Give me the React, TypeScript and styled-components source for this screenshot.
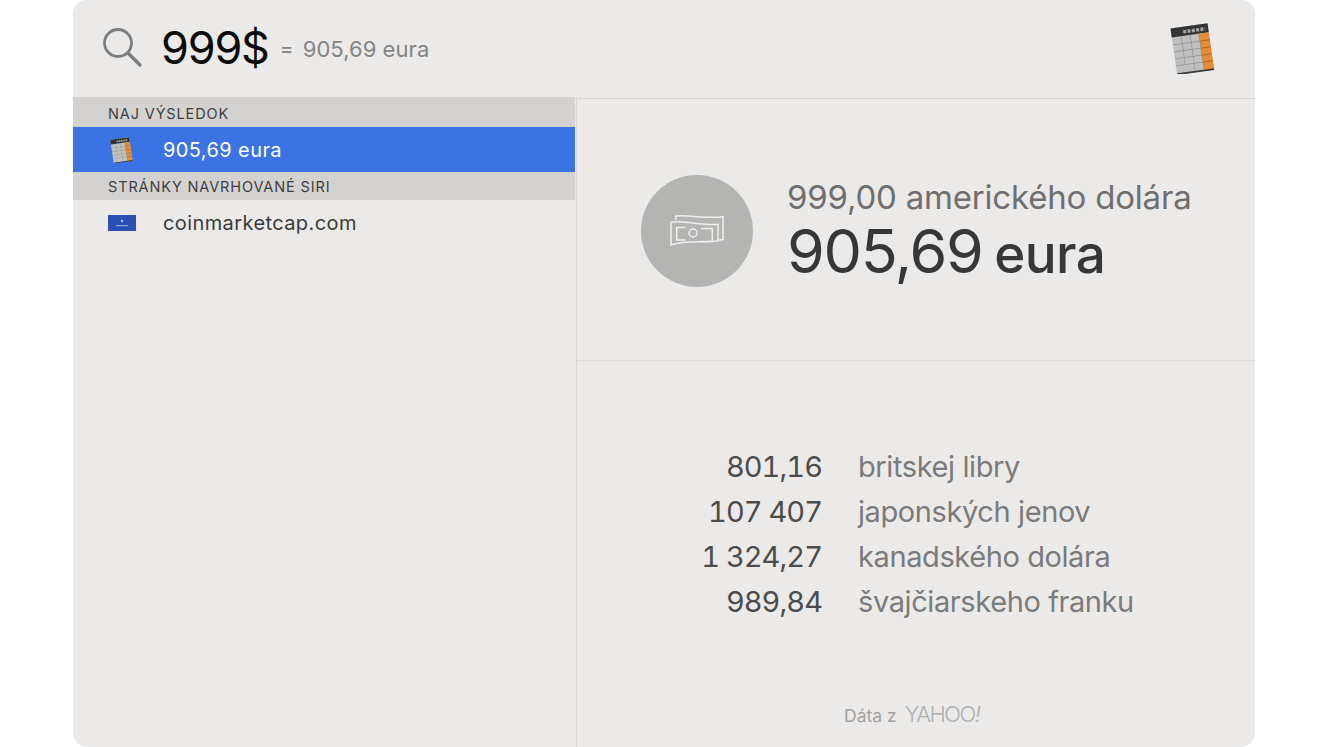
import React from "react";
import styled, { createGlobalStyle } from "styled-components";

const Global = createGlobalStyle`
  html, body { margin: 0; padding: 0; background: #fff; }
  body { font-family: Inter, "Liberation Sans", sans-serif; overflow: hidden; }
`;

const Page = styled.div`
  width: 1328px;
  height: 747px;
  display: flex;
  justify-content: flex-start;
  padding-left: 73px;
  box-sizing: border-box;
`;

const Panel = styled.div`
  width: 1182px;
  height: 747px;
  background: #ebeae9;
  border-radius: 14px;
  overflow: hidden;
  display: flex;
  flex-direction: column;
`;

const SearchBar = styled.header`
  height: 99px;
  flex: none;
  box-sizing: border-box;
  border-bottom: 1px solid #d6d5d4;
  display: flex;
  align-items: center;
  padding: 0 40px 0 28px;
`;

const SearchIcon = styled.svg`
  width: 42px;
  height: 42px;
  flex: none;
  margin-right: 18px;
  margin-top: -4px;
`;

const Query = styled.span`
  font-size: 45px;
  letter-spacing: -1.2px;
  color: #0b0b0b;
  line-height: 1;
  margin-top: -4px;
`;

const Equals = styled.span`
  font-size: 21px;
  color: #858585;
  margin-left: 11px;
  margin-right: 9px;
  margin-top: -1px;
`;

const QueryResult = styled.span`
  font-size: 22px;
  letter-spacing: 0.05px;
  color: #858585;
  margin-top: -1px;
`;

const AppIconSlot = styled.div`
  margin-left: auto;
  display: flex;
  margin-top: -2px;
`;

const Body = styled.div`
  flex: 1;
  display: flex;
  min-height: 0;
`;

const Sidebar = styled.aside`
  width: 502px;
  padding-right: 1px;
  flex: none;
  display: flex;
  flex-direction: column;
  border-right: 1px solid #d8d7d6;
  margin-top: -2px;
`;

const SectionHeader = styled.div<{ $h: number; $pad: number }>`
  height: ${(p) => p.$h}px;
  box-sizing: border-box;
  padding-top: ${(p) => p.$pad}px;
  background: #d3d2d1;
  color: #3f3f3f;
  font-size: 14.5px;
  letter-spacing: 0.87px;
  display: flex;
  align-items: center;
  padding-left: 35px;
`;

const Row = styled.div<{ $selected?: boolean }>`
  height: 45px;
  display: flex;
  align-items: center;
  background: ${(p) => (p.$selected ? "#3b73e4" : "transparent")};
  color: ${(p) => (p.$selected ? "#ffffff" : "#3a3a3a")};
  font-size: 20px;
  letter-spacing: 0.4px;
`;

const RowIcon = styled.div<{ $left: number }>`
  width: 90px;
  padding-left: ${(p) => p.$left}px;
  box-sizing: border-box;
  flex: none;
  display: flex;
`;

const Detail = styled.main`
  flex: 1;
  display: flex;
  flex-direction: column;
  min-width: 0;
  padding-top: 2px;
  margin-top: -2px;
`;

const Hero = styled.section`
  height: 262px;
  flex: none;
  box-sizing: border-box;
  border-bottom: 1px solid #dddcdb;
  display: flex;
  align-items: center;
  padding-left: 64px;
`;

const Coin = styled.div`
  width: 112px;
  height: 112px;
  border-radius: 50%;
  background: #b4b4b3;
  display: flex;
  align-items: center;
  justify-content: center;
  flex: none;
  margin-right: 34px;
  margin-top: 3px;
`;

const HeroText = styled.div`
  display: flex;
  flex-direction: column;
  margin-top: 8px;
`;

const HeroFrom = styled.div`
  font-size: 33px;
  line-height: 40px;
  letter-spacing: -0.2px;
  color: #6f6f6f;
`;

const HeroTo = styled.div`
  font-size: 53px;
  font-weight: 500;
  line-height: 72px;
  letter-spacing: -0.6px;
  word-spacing: -2px;
  color: #373737;
  white-space: nowrap;
  margin-top: -2px;
`;

const HeroDigits = styled.span`
  font-size: 61px;
  font-weight: 400;
  line-height: 72px;
  letter-spacing: -1.3px;
`;

const Rates = styled.section`
  flex: 1;
  display: flex;
  flex-direction: column;
  align-items: stretch;
  padding-top: 83px;
  position: relative;
`;

const RateRow = styled.div`
  height: 45px;
  display: flex;
  align-items: center;
  font-size: 29px;
`;

const Amount = styled.span`
  width: 245px;
  text-align: right;
  color: #4c4c4c;
  flex: none;
  font-variant-numeric: tabular-nums;
  letter-spacing: -0.95px;
`;

const Currency = styled.span`
  margin-left: 36px;
  color: #7b7b7b;
  letter-spacing: -0.4px;
`;

const Attribution = styled.div`
  position: absolute;
  left: 267px;
  bottom: 20px;
  display: flex;
  align-items: baseline;
  font-size: 17.5px;
  color: #a3a3a3;
`;

const YahooMark = styled.span`
  font-size: 22px;
  font-weight: 300;
  letter-spacing: -1.5px;
  margin-left: 8px;
  color: #b0b0b0;
`;

const YahooBang = styled.span`
  font-style: italic;
`;

const Calculator = ({ width, height }: { width: number; height: number }) => (
  <svg width={width} height={height} viewBox="0 0 45 51">
    <g transform="matrix(1 -0.139 0.144 1 0.5 5.5)">
      <rect x="0" y="0" width="37" height="46" rx="1" fill="#bfbfbe" />
      <rect x="0" y="0" width="37" height="9" fill="#343433" />
      <rect x="27" y="9" width="10" height="37" fill="#e58c35" />
      <rect x="0" y="44.800" width="37" height="1.800" fill="#3c3c3c" />
      {[16, 23, 30, 37].map((y) => (
        <React.Fragment key={y}>
          <rect x="0" y={y} width="27" height="0.7" fill="#929292" />
          <rect x="27" y={y} width="10" height="0.8" fill="#a9641f" />
        </React.Fragment>
      ))}
      {[9, 18].map((x) => (
        <rect key={x} x={x} y="9" width="0.7" height="28" fill="#929292" />
      ))}
      <rect x="18" y="37" width="0.7" height="8" fill="#929292" />
      <rect x="26.700" y="9" width="0.7" height="36" fill="#8d8d8d" />
      <path d="M12 5 H34" stroke="#a6a6a6" strokeWidth="3.400" strokeDasharray="3 1.300" />
    </g>
  </svg>
);

const Flag = () => (
  <svg width="28" height="16" viewBox="0 0 28 16">
    <rect width="28" height="16" rx="0.5" fill="#2b4fb4" />
    <circle cx="14" cy="6" r="1.200" fill="#b7c6ee" />
    <rect x="8" y="10" width="12" height="1.200" fill="#8ea4e0" />
  </svg>
);

const Banknotes = () => (
  <svg width="54" height="32" viewBox="0 0 54 32" fill="none" stroke="#efefee" strokeWidth="1.500">
    <path d="M1 7.300 C14 5 30 11 48 9.300 V26 C33 28 16 25 1 30 Z" />
    <path d="M5.700 5 V1 C22 0 36 4 53 1.700 V24.500 L48 25.300" />
    <path d="M15.700 12.500 H6.700 V25 H15.700" />
    <path d="M31 13.500 H42.300 V26.500 H31" />
    <circle cx="23" cy="18" r="4" />
  </svg>
);

const rates = [
  ["801,16", "britskej libry"],
  ["107 407", "japonských jenov"],
  ["1 324,27", "kanadského dolára"],
  ["989,84", "švajčiarskeho franku"],
];

export default function App() {
  return (
    <Page>
      <Global />
      <Panel>
        <SearchBar>
          <SearchIcon viewBox="0 0 42 42" fill="none" stroke="#7d7d7d">
            <circle cx="17" cy="17" r="13.500" strokeWidth="2.800" />
            <path d="M27 27 L39 39" strokeWidth="3.400" strokeLinecap="round" />
          </SearchIcon>
          <Query>999$</Query>
          <Equals>=</Equals>
          <QueryResult>905,69 eura</QueryResult>
          <AppIconSlot>
            <Calculator width={45} height={51} />
          </AppIconSlot>
        </SearchBar>
        <Body>
          <Sidebar>
            <SectionHeader $h={30} $pad={2}>NAJ VÝSLEDOK</SectionHeader>
            <Row $selected>
              <RowIcon $left={37}>
                <Calculator width={23} height={26} />
              </RowIcon>
              905,69 eura
            </Row>
            <SectionHeader $h={28} $pad={0}>STRÁNKY NAVRHOVANÉ SIRI</SectionHeader>
            <Row>
              <RowIcon $left={35}>
                <Flag />
              </RowIcon>
              coinmarketcap.com
            </Row>
          </Sidebar>
          <Detail>
            <Hero>
              <Coin>
                <Banknotes />
              </Coin>
              <HeroText>
                <HeroFrom>999,00 amerického dolára</HeroFrom>
                <HeroTo>
                  <HeroDigits>905,69</HeroDigits> eura
                </HeroTo>
              </HeroText>
            </Hero>
            <Rates>
              {rates.map(([a, c]) => (
                <RateRow key={c}>
                  <Amount>{a}</Amount>
                  <Currency>{c}</Currency>
                </RateRow>
              ))}
              <Attribution>
                Dáta z
                <YahooMark>
                  YAHOO<YahooBang>!</YahooBang>
                </YahooMark>
              </Attribution>
            </Rates>
          </Detail>
        </Body>
      </Panel>
    </Page>
  );
}
